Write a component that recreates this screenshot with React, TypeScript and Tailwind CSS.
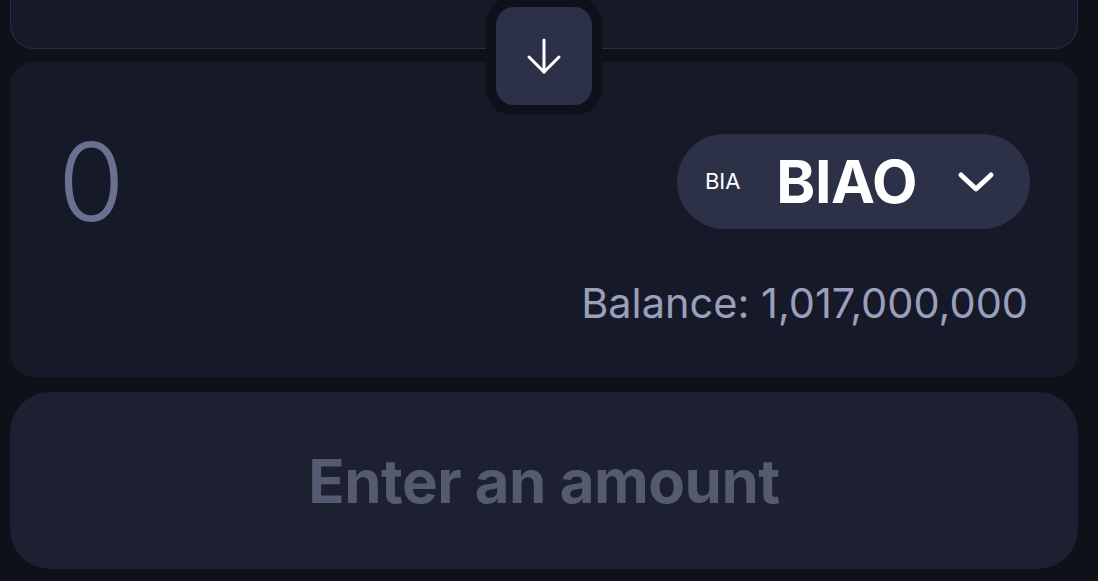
import React from "react";

function ArrowDown() {
  return (
    <svg width="40" height="40" viewBox="0 0 40 40" fill="none" stroke="#ffffff" strokeWidth="3" strokeLinecap="round" strokeLinejoin="round">
      <path d="M20 4 V36" />
      <path d="M5 21 L20 36 L35 21" />
    </svg>
  );
}

function Chevron() {
  return (
    <svg width="38" height="24" viewBox="0 0 38 24" fill="none" stroke="#ffffff" strokeWidth="5" strokeLinecap="round" strokeLinejoin="round">
      <path d="M4 5 L19 19 L34 5" />
    </svg>
  );
}

export default function App() {
  return (
    <div className="w-[1098px] h-[581px] overflow-hidden bg-[#0e101a]" style={{ fontFamily: "Inter, 'Noto Sans', sans-serif" }}>
      <div className="relative w-[1098px] h-[590px] px-[10px] flex flex-col">
        {/* top card (cut off) */}
        <div className="w-[1068px] h-[49px] bg-[#161a28] border-x border-b border-[#292e42] rounded-b-[24px]" />

        {/* switch button */}
        <div className="absolute left-[486px] top-[-3px] w-[116px] h-[118px] rounded-[26px] bg-[#0e101a] p-[10px]">
          <div className="w-full h-full rounded-[18px] bg-[#2c3148] flex items-center justify-center">
            <ArrowDown />
          </div>
        </div>

        {/* output card */}
        <div className="mt-[13px] w-[1068px] h-[315px] bg-[#161a28] rounded-[24px] px-[48px] pt-[72px] flex flex-col">
          <div className="flex items-center justify-between h-[95px]">
            <span className="text-[108px] font-[350] leading-none text-[#6a7090]">0</span>
            <div className="flex items-center h-[95px] rounded-full bg-[#2c3148] pl-[28px] pr-[35px]">
              <span className="text-[22px] font-normal text-white">BIA</span>
              <span className="ml-[36px] text-[59px] font-bold text-white tracking-[-0.5px] leading-none">BIAO</span>
              <span className="ml-[40px] flex items-center"><Chevron /></span>
            </div>
          </div>
          <div className="mt-[50px] text-right text-[41.5px] leading-[48px] text-[#9a9fbb] mr-[2px]">Balance: 1,017,000,000</div>
        </div>

        {/* action button */}
        <div className="mt-[15px] w-[1068px] h-[177px] bg-[#1c2030] rounded-[40px] flex items-center justify-center">
          <span className="text-[60px] font-bold text-[#545a6f] tracking-[-0.5px]">Enter an amount</span>
        </div>
      </div>
    </div>
  );
}
